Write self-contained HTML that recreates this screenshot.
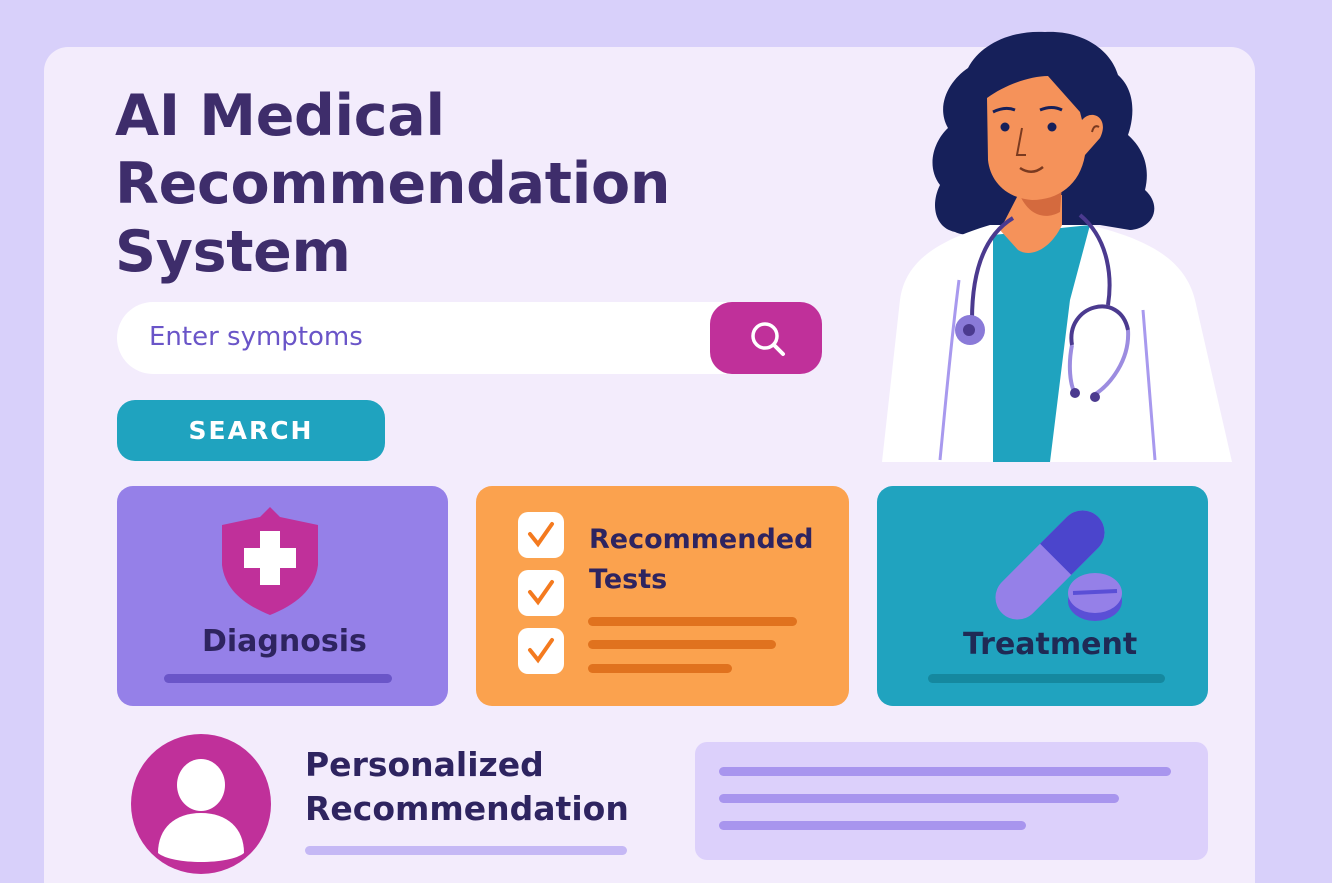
<!DOCTYPE html>
<html><head><meta charset="utf-8"><style>
html,body{margin:0;width:1332px;height:883px;overflow:hidden}
body{background:#d8d0fa;font-family:"DejaVu Sans","Liberation Sans",sans-serif;position:relative}
.p{position:absolute;left:44px;top:47px;width:1211px;height:836px;background:#f3ecfc;border-radius:24px 24px 0 0}
.a{position:absolute}
h1{position:absolute;left:115px;top:82px;margin:0;font-size:57px;line-height:68px;color:#3e2d6b;font-weight:bold;letter-spacing:-0.3px}
.card{position:absolute;top:486px;height:220px;border-radius:16px}
.bar{position:absolute;height:9px;border-radius:5px}
.t{position:absolute;font-weight:bold;color:#2e2460}
</style></head><body>
<div class="p"></div>
<h1>AI Medical<br>Recommendation<br>System</h1>
<div class="a" style="left:117px;top:302px;width:705px;height:72px;background:#fff;border-radius:36px"></div>
<div class="a" style="left:149px;top:322px;font-size:26px;color:#6a55c8">Enter symptoms</div>
<div class="a" style="left:710px;top:302px;width:112px;height:72px;background:#c0309a;border-radius:22px"></div>
<svg class="a" style="left:745px;top:318px" width="44" height="40"><circle cx="20" cy="18" r="12" stroke="#fff" stroke-width="3.5" fill="none"/><line x1="29" y1="27" x2="38" y2="36" stroke="#fff" stroke-width="4" stroke-linecap="round"/></svg>
<div class="a" style="left:117px;top:400px;width:268px;height:61px;background:#1fa3bf;border-radius:18px;color:#fff;font-weight:bold;font-size:25px;line-height:61px;text-align:center;letter-spacing:2px">SEARCH</div>

<svg class="a" style="left:0;top:0" width="1332" height="470">
<path d="M955 232 C935 228 930 205 940 185 C925 165 935 140 948 128 C935 105 950 80 968 68 C980 45 1010 30 1045 32 C1080 30 1110 48 1118 75 C1135 90 1135 115 1128 135 C1145 150 1150 170 1145 190 C1162 205 1155 228 1130 230 L1100 225 L1000 225 C985 235 965 237 955 232Z" fill="#16205a"/>
<path d="M882 462 L900 300 C905 260 940 240 990 225 L1090 225 C1150 240 1185 260 1195 300 L1232 462Z" fill="#fff"/>
<path d="M993 462 L993 235 L1090 225 L1070 300 L1050 462Z" fill="#1fa3bf"/>
<path d="M1018 195 L1062 195 L1062 225 C1050 250 1030 258 1018 250 L1000 230Z" fill="#f5925a"/>
<path d="M1018 190 L1062 185 L1060 212 C1042 222 1025 212 1018 190Z" fill="#d46a3e"/>
<path d="M987 98 C1005 85 1030 76 1048 76 L1080 112 L1082 120 C1092 108 1110 118 1100 138 L1085 155 C1080 185 1058 200 1032 200 C1005 198 990 180 988 160Z" fill="#f5925a"/>
<circle cx="1005" cy="127" r="4.5" fill="#16205a"/><circle cx="1052" cy="127" r="4.5" fill="#16205a"/>
<path d="M993 112 Q1005 106 1015 110 M1040 110 Q1052 105 1062 110" stroke="#16205a" stroke-width="3" fill="none"/>
<path d="M1022 128 L1017 155 L1026 155" stroke="#7a3a20" stroke-width="2" fill="none"/>
<path d="M1020 168 Q1032 176 1043 167" stroke="#7a3a20" stroke-width="2.5" fill="none"/>
<path d="M1092 132 Q1094 124 1099 127" stroke="#7a3a20" stroke-width="2" fill="none"/>
<path d="M1013 218 C985 235 972 270 972 320" stroke="#4b3a8f" stroke-width="4" fill="none"/>
<path d="M1080 215 C1110 240 1112 280 1108 305" stroke="#4b3a8f" stroke-width="4" fill="none"/>
<circle cx="970" cy="330" r="15" fill="#8a7ad8"/><circle cx="969" cy="330" r="6" fill="#4b3a8f"/>
<path d="M1128 330 C1130 360 1110 385 1094 395 M1072 345 C1068 365 1070 385 1075 393" stroke="#9c8ce0" stroke-width="4" fill="none"/>
<path d="M1072 345 C1065 305 1120 290 1128 330" stroke="#4b3a8f" stroke-width="4" fill="none"/>
<circle cx="1075" cy="393" r="5" fill="#4b3a8f"/><circle cx="1095" cy="397" r="5" fill="#4b3a8f"/>
<path d="M959 280 C950 350 945 410 940 460 M1143 310 L1155 460" stroke="#a899ee" stroke-width="3" fill="none"/>
</svg>

<div class="card" style="left:117px;width:331px;background:#9580e8"></div>
<svg class="a" style="left:220px;top:505px" width="102" height="112"><path d="M50 2 L60 12 L98 20 L98 60 C95 85 75 100 50 110 C25 100 5 85 2 60 L2 20 L40 12Z" fill="#c0309a"/><rect x="40" y="26" width="20" height="54" fill="#fff"/><rect x="24" y="43" width="52" height="20" fill="#fff"/></svg>
<div class="t" style="left:202px;top:624px;font-size:30px">Diagnosis</div>
<div class="bar" style="left:164px;top:674px;width:228px;background:#6a55c8"></div>

<div class="card" style="left:476px;width:373px;background:#fba24e"></div>
<div class="a" style="left:518px;top:512px;width:46px;height:46px;background:#fff;border-radius:10px"></div>
<div class="a" style="left:518px;top:570px;width:46px;height:46px;background:#fff;border-radius:10px"></div>
<div class="a" style="left:518px;top:628px;width:46px;height:46px;background:#fff;border-radius:10px"></div>
<svg class="a" style="left:518px;top:512px" width="46" height="170"><g stroke="#f47a1f" stroke-width="4" fill="none" stroke-linecap="round"><path d="M12 22 L20 32 L34 12"/><path d="M12 80 L20 90 L34 70"/><path d="M12 138 L20 148 L34 128"/></g></svg>
<div class="t" style="left:589px;top:520px;font-size:27px;line-height:40px">Recommended<br>Tests</div>
<div class="bar" style="left:588px;top:617px;width:209px;background:#e0721e"></div>
<div class="bar" style="left:588px;top:640px;width:188px;background:#e0721e"></div>
<div class="bar" style="left:588px;top:664px;width:144px;background:#e0721e"></div>

<div class="card" style="left:877px;width:331px;background:#20a3bf"></div>
<svg class="a" style="left:990px;top:505px" width="140" height="120"><g transform="rotate(45 60 60)"><rect x="38" y="-8" width="44" height="136" rx="22" fill="#9580e8"/><path d="M38 52 L38 14 A22 22 0 0 1 82 14 L82 52Z" fill="#4b45cc"/></g><ellipse cx="105" cy="96" rx="27" ry="20" fill="#5a4fd6"/><ellipse cx="105" cy="88" rx="27" ry="20" fill="#9580e8"/><line x1="83" y1="88" x2="127" y2="86" stroke="#5a4fd6" stroke-width="4"/></svg>
<div class="t" style="left:963px;top:627px;font-size:30px;color:#1f2a55">Treatment</div>
<div class="bar" style="left:928px;top:674px;width:237px;background:#15889f"></div>

<svg class="a" style="left:130px;top:733px" width="142" height="142"><circle cx="71" cy="71" r="70" fill="#c0309a"/><ellipse cx="71" cy="52" rx="24" ry="26" fill="#fff"/><path d="M28 120 C28 95 45 80 71 80 C97 80 114 95 114 120 C100 132 42 132 28 120Z" fill="#fff"/></svg>
<div class="t" style="left:305px;top:743px;font-size:33px;line-height:44px">Personalized<br>Recommendation</div>
<div class="bar" style="left:305px;top:846px;width:322px;background:#c5b8f5"></div>
<div class="a" style="left:695px;top:742px;width:513px;height:118px;background:#dcd0fb;border-radius:12px"></div>
<div class="bar" style="left:719px;top:767px;width:452px;background:#a895ee"></div>
<div class="bar" style="left:719px;top:794px;width:400px;background:#a895ee"></div>
<div class="bar" style="left:719px;top:821px;width:307px;background:#a895ee"></div>
</body></html>
